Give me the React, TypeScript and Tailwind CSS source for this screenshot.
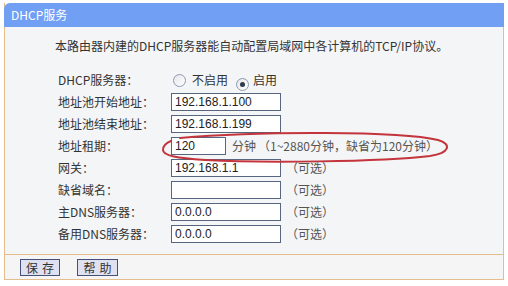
import React from 'react';

const cjk = { fontFamily: '"Noto Sans CJK SC", "Noto Sans", sans-serif' };

function Radio({ checked }: { checked?: boolean }) {
  return (
    <span className="relative inline-flex w-[13px] h-[13px] rounded-full border border-[#8c9bb0] bg-gradient-to-br from-[#e4e6ea] to-white items-center justify-center">
      {checked && <span className="w-[5px] h-[5px] rounded-full bg-[#2d3a4e]" />}
    </span>
  );
}

function TextBox({ value, narrow }: { value: string; narrow?: boolean }) {
  return (
    <div
      className={`${narrow ? 'w-[55px]' : 'w-[110px]'} h-[18px] bg-white border border-[#56667e] pl-[3px] text-[12px] leading-[16px] text-[#222]`}
      style={{ fontFamily: '"Liberation Sans", Arial, sans-serif' }}
    >
      {value}
    </div>
  );
}

function Row({ label, children }: { label: string; children: React.ReactNode }) {
  return (
    <div className="flex items-center h-[22px]">
      <div className="w-[113px] text-[12px] text-[#333]">{label}</div>
      <div className="flex items-center">{children}</div>
    </div>
  );
}

const optional = <span className="ml-[5px] text-[12px] text-[#555]">（可选）</span>;

export default function App() {
  return (
    <div className="relative w-[508px] h-[286px] bg-white pt-[3px] pl-[4px]" style={cjk}>
      <div className="w-[500px] border-x border-b border-[#e3bd8c]">
        {/* Header */}
        <div className="h-[24px] -mx-px bg-[#719ff4] rounded-tl-[6px] pl-[7px] flex items-center text-white text-[12px]">
          DHCP服务
        </div>

        {/* Body */}
        <div className="bg-[#f4f5f7] pt-[10px] pb-[9px]">
          <div className="pl-[50px] text-[12px] leading-[18px] text-[#333]">
            本路由器内建的DHCP服务器能自动配置局域网中各计算机的TCP/IP协议。
          </div>

          <div className="pl-[53px] mt-[14px]">
            <Row label="DHCP服务器：">
              <span className="ml-[2px]"><Radio /></span>
              <span className="ml-[6px] text-[12px] text-[#333]">不启用</span>
              <span className="ml-[8px]"><Radio checked /></span>
              <span className="ml-[4px] text-[12px] text-[#333]">启用</span>
            </Row>
            <Row label="地址池开始地址：">
              <TextBox value="192.168.1.100" />
            </Row>
            <Row label="地址池结束地址：">
              <TextBox value="192.168.1.199" />
            </Row>
            <Row label="地址租期：">
              <TextBox value="120" narrow />
              <span className="ml-[6px] text-[12px] text-[#555]">分钟</span>
              <span className="ml-[2px] text-[12px] text-[#555]">（1~2880分钟，缺省为120分钟）</span>
            </Row>
            <Row label="网关：">
              <TextBox value="192.168.1.1" />
              {optional}
            </Row>
            <Row label="缺省域名：">
              <TextBox value="" />
              {optional}
            </Row>
            <Row label="主DNS服务器：">
              <TextBox value="0.0.0.0" />
              {optional}
            </Row>
            <Row label="备用DNS服务器：">
              <TextBox value="0.0.0.0" />
              {optional}
            </Row>
          </div>
        </div>

        {/* Footer */}
        <div className="h-[25px] border-t border-[#e3bd8c] bg-[#f6f5f6] flex items-center pl-[15px] gap-[17px]">
          <button className="w-[40px] h-[17px] bg-[#dfe1f1] border border-[#45507a] text-[12px] leading-[15px] text-[#333] tracking-[4px] pl-[4px]">
            保存
          </button>
          <button className="w-[41px] h-[17px] bg-[#dfe1f1] border border-[#45507a] text-[12px] leading-[15px] text-[#333] tracking-[4px] pl-[4px]">
            帮助
          </button>
        </div>
      </div>

      {/* hand-drawn red ellipse */}
      <svg className="absolute left-0 top-0 pointer-events-none" width="508" height="286">
        <path
          d="M 180 138 C 260 131, 400 131, 438 140 C 452 144, 450 153, 430 156 C 380 162, 260 163, 205 160 C 178 158, 163 156, 163 150 C 163 146, 166 143, 171 141"
          fill="none"
          stroke="#c3343c"
          strokeWidth="2"
          strokeLinecap="round"
        />
      </svg>
    </div>
  );
}
